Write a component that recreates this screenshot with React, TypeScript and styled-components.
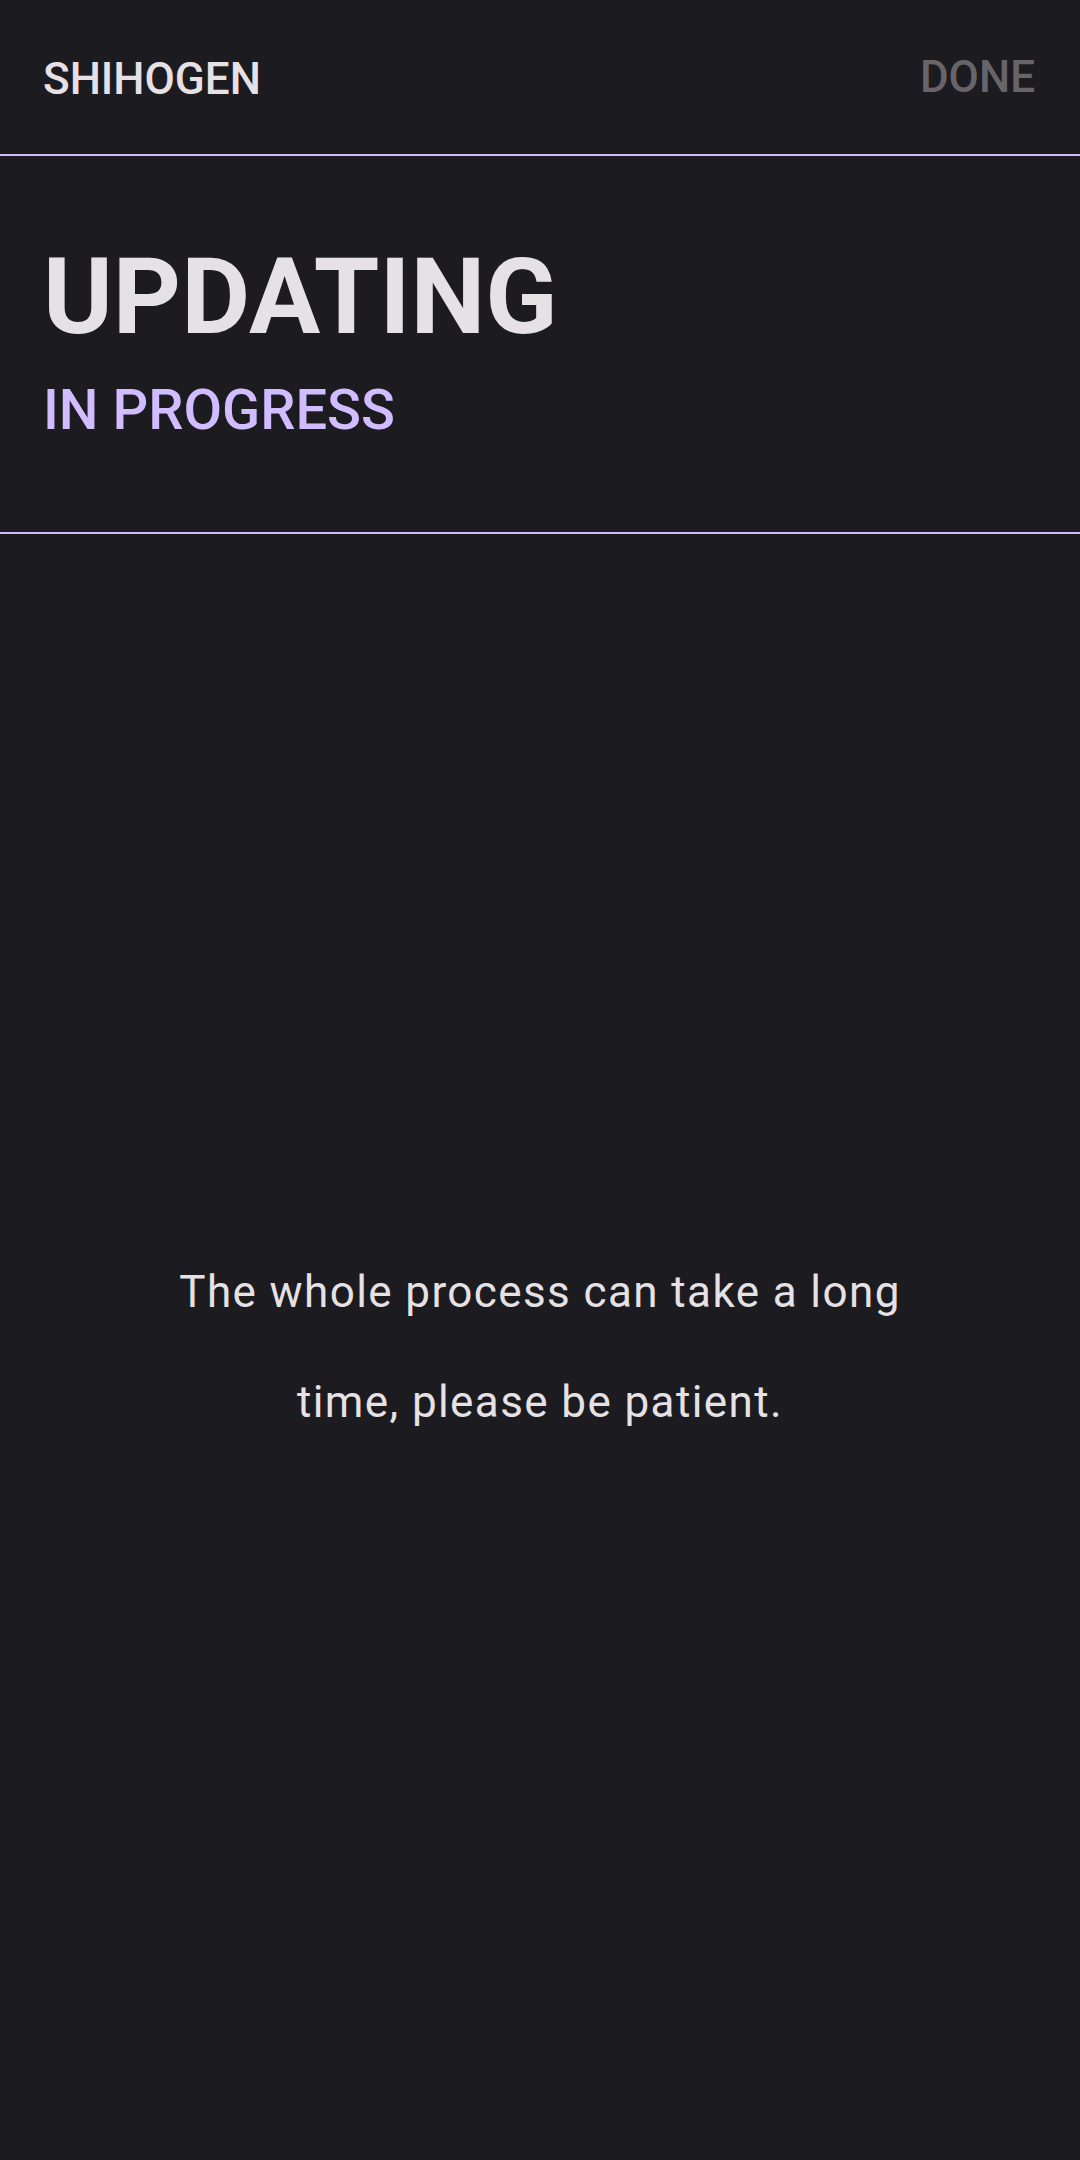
import React from 'react'
import styled, { createGlobalStyle } from 'styled-components'

const GlobalStyle = createGlobalStyle`
  html, body {
    margin: 0;
    padding: 0;
    background-color: #1c1b1f;
  }
  body {
    font-family: Roboto, "Noto Sans", sans-serif;
    color: #e6e1e5;
  }
`

const StyledScreen = styled.div`
  display: flex;
  flex-direction: column;
  min-height: 100vh;
  background-color: #1c1b1f;
`

const StyledTopBar = styled.header`
  display: flex;
  align-items: center;
  justify-content: space-between;
  height: 154px;
  padding: 0 45px 0 43px;
  border-bottom: 2px solid #cfbcf7;
`

const StyledBrand = styled.div`
  margin-top: 3px;
  font-size: 44px;
  font-weight: 500;
  color: #e6e1e5;
`

const StyledAction = styled.button<{ $disabled?: boolean }>`
  background: none;
  border: none;
  padding: 0;
  font-family: inherit;
  font-size: 44px;
  font-weight: 500;
  color: ${(p) => (p.$disabled ? 'rgba(230, 225, 229, 0.38)' : '#d0bcff')};
`

const StyledHero = styled.section`
  display: flex;
  flex-direction: column;
  gap: 32px;
  padding: 88px 43px 94px;
  border-bottom: 2px solid #cfbcf7;
`

const StyledTitle = styled.h1`
  margin: 0;
  font-size: 106px;
  font-weight: 700;
  line-height: 1;
  color: #e6e1e5;
`

const StyledSubtitle = styled.h2`
  margin: 0;
  font-size: 56px;
  font-weight: 500;
  line-height: 1;
  color: #d0bcff;
`

const StyledBody = styled.main`
  flex: 1;
  display: flex;
  align-items: center;
  justify-content: center;
  padding: 0 150px;
`

const StyledMessage = styled.p`
  margin: 0;
  font-size: 44px;
  line-height: 110px;
  letter-spacing: 1.4px;
  text-align: center;
  color: #e6e1e5;
`

export default function App() {
  return (
    <>
      <GlobalStyle />
      <StyledScreen>
        <StyledTopBar>
          <StyledBrand>SHIHOGEN</StyledBrand>
          <StyledAction $disabled>DONE</StyledAction>
        </StyledTopBar>
        <StyledHero>
          <StyledTitle>UPDATING</StyledTitle>
          <StyledSubtitle>IN PROGRESS</StyledSubtitle>
        </StyledHero>
        <StyledBody>
          <StyledMessage>
            The whole process can take a long time, please be patient.
          </StyledMessage>
        </StyledBody>
      </StyledScreen>
    </>
  )
}
